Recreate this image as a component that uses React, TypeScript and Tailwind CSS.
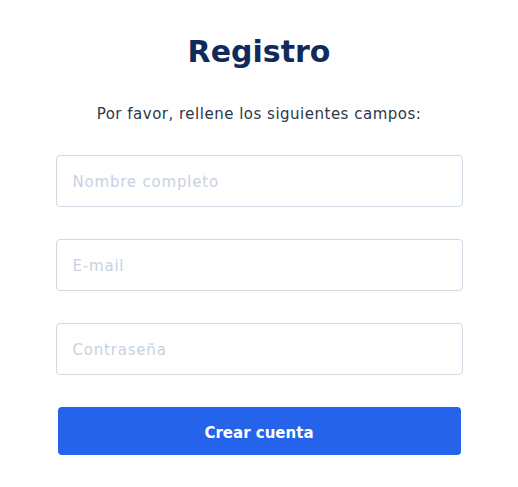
const fields = ["Nombre completo", "E-mail", "Contraseña"];

const App = () => {
  return (
    <div className="min-h-screen bg-white flex justify-center font-['DejaVu_Sans',sans-serif]">
      <div className="w-[407px] flex flex-col items-center pt-[31px]">
        <h1 className="text-[30px] leading-[42px] font-bold text-[#0f2b5b]">
          Registro
        </h1>
        <p className="mt-[29px] text-[15px] leading-[24px] text-[#2d3748] tracking-[0.5px]">
          Por favor, rellene los siguientes campos:
        </p>

        <form className="w-full flex flex-col gap-8 mt-[29px]">
          {fields.map((f) => (
            <input
              key={f}
              type={f === "Contraseña" ? "password" : "text"}
              placeholder={f}
              className="w-full h-[52px] px-4 pt-[2px] rounded border border-[#cfd8e3] text-[15px] tracking-[0.8px] text-[#2d3748] placeholder:text-[#c7d2e0] outline-none"
            />
          ))}
          <button
            type="button"
            className="mx-[2px] h-[48px] pt-1 rounded bg-[#2563eb] text-white text-[15px] font-bold"
          >
            Crear cuenta
          </button>
        </form>
      </div>
    </div>
  );
};

export default App;
